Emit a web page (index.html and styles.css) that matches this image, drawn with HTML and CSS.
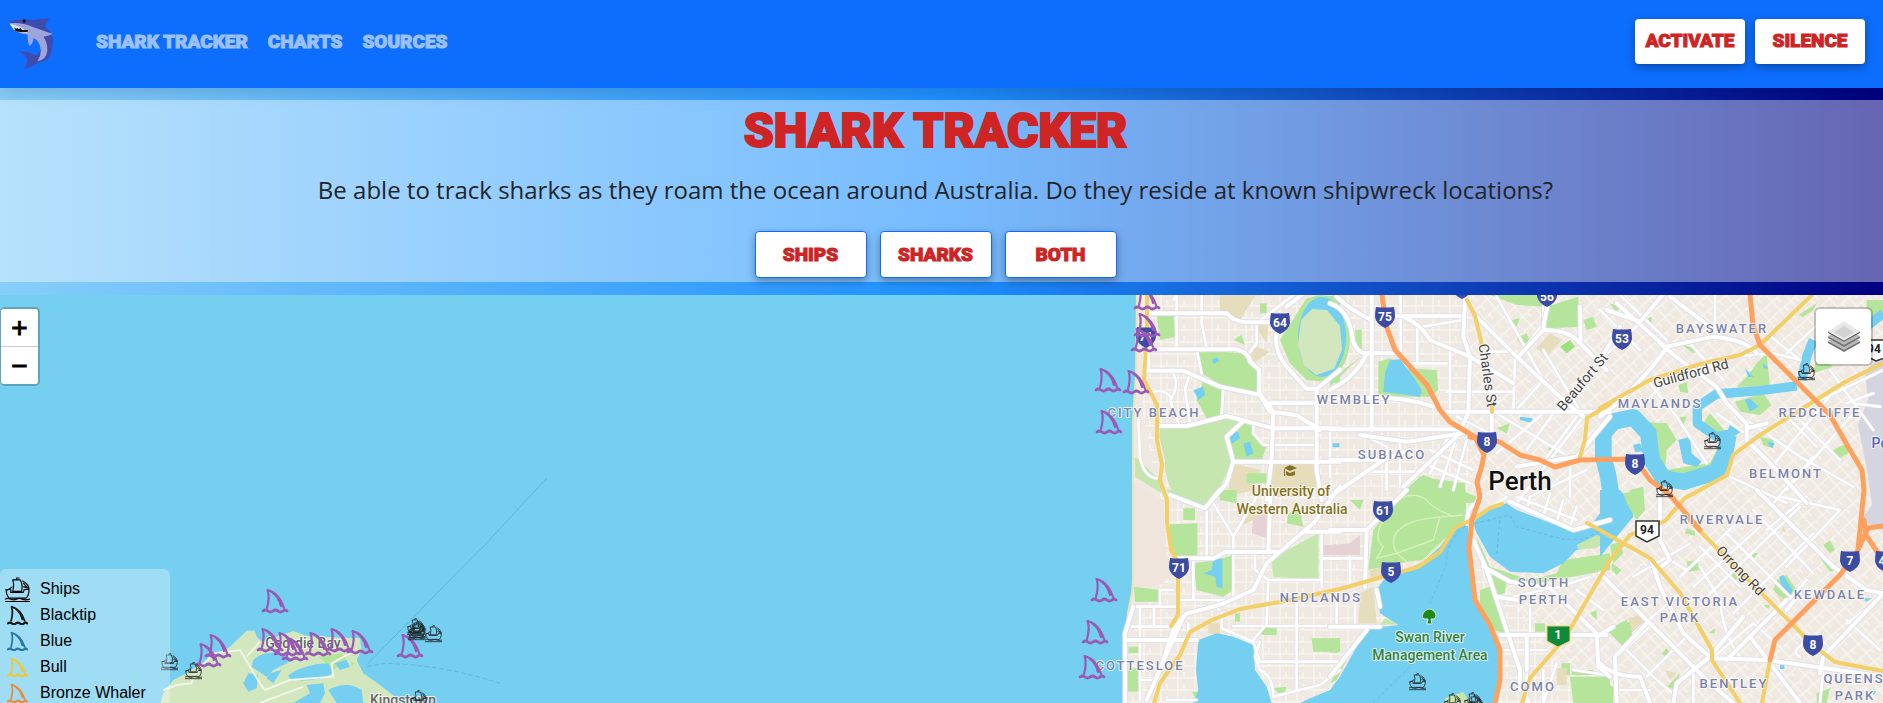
FILE: index.html
```html
<!DOCTYPE html>
<html lang="en">
<head>
<meta charset="utf-8">
<title>Shark Tracker</title>
<link rel="stylesheet" href="styles.css">
</head>
<body>
<nav class="navbar">
  <a class="brand" href="#" aria-label="Shark Tracker home">
    <svg viewBox="0 0 140 156" aria-hidden="true">
      <path fill="#3f4caf" d="M2 12Q22 2 76 6Q100 0 124 2Q112 14 111 27Q136 42 134 76Q132 116 112 128L98 132Q88 134 78 142Q62 150 45 154Q58 142 57 124Q50 106 30 100Q62 98 84 113Q98 106 98 84Q90 56 62 46L24 40Z"/>
      <path fill="#9da6dc" d="M3 16Q40 12 72 26Q96 34 134 48Q118 54 106 56Q124 84 114 112Q106 128 88 129Q98 114 98 98Q96 68 76 60Q74 78 64 84Q56 66 59 50Q34 48 20 36Z"/>
      <path fill="#e8eaf6" d="M5 18Q26 20 58 40L58 44Q26 44 16 34Z"/>
      <path fill="#151515" d="M18 28L24 32L28 29L32 34L37 30L42 36L60 36L58 42L34 42L22 39Z"/>
      <circle cx="48" cy="9" r="5" fill="#111"/>
    </svg>
  </a>
  <div class="links">
    <a href="#">SHARK TRACKER</a>
    <a href="#">CHARTS</a>
    <a href="#">SOURCES</a>
  </div>
  <div class="actions">
    <button class="btn" type="button">ACTIVATE</button>
    <button class="btn" type="button">SILENCE</button>
  </div>
</nav>

<header class="hero">
  <h1>SHARK TRACKER</h1>
  <p>Be able to track sharks as they roam the ocean around Australia. Do they reside at known shipwreck locations?</p>
  <div class="filters">
    <button class="btn outlined" type="button">SHIPS</button>
    <button class="btn outlined" type="button">SHARKS</button>
    <button class="btn outlined" type="button">BOTH</button>
  </div>
</header>

<main class="map">
<svg class="canvas" viewBox="0 295 1883 408" preserveAspectRatio="xMinYMin slice" role="img" aria-label="Map of Perth">
<defs>
  <pattern id="grid" width="17" height="12" patternUnits="userSpaceOnUse"><path class="lane" d="M0 6H17M5 0V12M11 0V6"/></pattern>
  <pattern id="diag" width="15" height="12" patternUnits="userSpaceOnUse" patternTransform="rotate(-42)"><path class="lane" d="M0 6H15M5 0V12M11 6V12"/></pattern>
  <symbol id="fin" viewBox="0 0 26 25" overflow="visible">
    <path d="M5 20Q8 9 5.500 2Q17 5 22 20M10 4Q17 9 19 18" fill="none" stroke="currentColor" stroke-width="2.200" stroke-linejoin="round" stroke-linecap="round"/>
    <path d="M1 23Q3.500 21 6 23T11 23T16 23T21 23T25 23" fill="none" stroke="currentColor" stroke-width="2.800" stroke-linecap="round"/>
  </symbol>
  <symbol id="ship" viewBox="0 0 26 26" overflow="visible">
    <g fill="none" stroke="currentColor" stroke-width="1.200" stroke-linejoin="round">
      <path d="M1 13H6V16H19L20 13H25Q25 19 22 22H4Q1 18 1 13ZM8 15Q10 8 8 3H16Q19 9 17 15Z"/>
      <path d="M12 3V1H15M18 4Q24 7 25 12L19 10M19 6L23 11M2 14L8 10"/>
      <path d="M0 23Q3 21.500 6 23T12 23T18 23T26 23M0 25.500H26"/>
    </g>
  </symbol>
  <path id="shield" d="M-9 -10Q0 -9 9 -10Q10 -5 10 0Q9 7 0 11Q-9 7 -10 0Q-10 -5 -9 -10Z"/>

  <g id="minor">
    <g transform="translate(1060 290) scale(.3333)"><path d="M350 15V175M425 15V100L440 175M590 100V160L560 200M410 180L425 250M340 250Q360 290 330 330L355 400M390 250L375 300L390 400M490 295L485 375M235 390L240 500Q250 560 290 565M580 400V430L610 465H770M605 335H770M700 15L590 100M270 310Q310 290 335 325M340 30L350 15M640 420L770 420"/></g>
    <g transform="translate(1060 490) scale(.3333)"><path d="M440 50V195M460 40L520 140V330M585 190V240L625 270H785M785 130V290M785 205H840M400 205V330M360 330H520M300 300V350M340 300H300V348M215 350H360M240 350V455M282 350V410M215 410H330M240 455V630M475 330V360M485 370V415L580 455L600 515H840M520 408H840M710 330V600M600 455L585 500L600 540Q640 560 640 620L780 585L840 540M320 630H410M240 570H300M385 400V450M615 408L580 450M590 20L520 140M625 270L620 400"/></g>
    <g transform="translate(1330 290) scale(.3333)"><path d="M212 15V190M262 100V215M230 220H350M360 180V370M415 180V370M350 305H550M555 205L550 370M280 110L400 90M640 270L550 370M640 50V100L565 200M500 20L640 270M760 380L560 640M700 330L590 480M500 370L700 490M640 370L500 490M380 380L500 440M360 430L300 550M380 440L330 590M410 450L370 600M300 480L430 540M280 520L420 580M110 440L170 470V600M210 450V590M0 420V560M130 545H280M740 380L630 530M770 540L600 620M720 500V620M640 180L760 380M480 185H560"/></g>
    <g transform="translate(1330 490) scale(.3333)"><path d="M60 200V290M20 310V410M75 305V410M0 205H100M510 330L640 300M600 320V430M590 440V639M660 300L780 260M510 480H650M640 540V639M820 360L740 300M730 540L830 555M560 560L600 639M680 520L640 639M530 20L500 40M600 20L590 60M660 10L640 80M700 30L680 95M740 50L720 110M560 20L740 90"/></g>
    <g transform="translate(1600 290) scale(.3333)"><path d="M0 60L120 180M60 15L200 150M345 15V150M500 130L600 210L520 190L400 200M560 190L700 60M0 210L130 90M260 150L370 270M150 280L230 380L320 520M230 250L150 320M350 370L450 440M440 390L600 500L760 590M500 550L720 280M560 600L760 370M620 350L850 240M600 390L720 510M740 340L820 310M760 340L840 350M690 240L820 420M650 470L560 380M390 560L560 639M640 500L520 639"/></g>
    <g transform="translate(1600 490) scale(.3333)"><path d="M240 260L430 80M280 290L480 110M310 330L600 50M400 370L640 130M300 170L420 290M380 130L580 330M460 60L640 250M540 20L720 60L560 230M620 270L540 360M330 510L460 400L540 470M260 240L210 210M100 260L270 160M240 310L100 430M300 230L360 330Q370 440 420 500M280 520V639M140 560L260 440M160 400L50 500M500 120L620 20M70 470L160 560L230 620M60 600H150M660 640L670 540M740 400L850 320M600 500Q560 480 650 440M740 390L840 480"/></g>
  </g>
  <g id="major">
    <g transform="translate(1060 290) scale(.3333)"><path d="M265 70H500Q520 95 560 97H640M270 178H530Q570 190 570 215L598 240V310L640 365L635 510L620 630M260 242H370L480 290L600 315L630 365L710 375L780 420M630 340H770M300 408H380L500 378L640 415H840M840 240L770 297V540L785 630M650 130Q640 180 680 230L740 297H770M725 15L680 50M545 398L500 440L520 515L500 580L455 630M520 515H840M265 70V230"/></g>
    <g transform="translate(1060 490) scale(.3333)"><path d="M330 15L435 55L480 0M350 205H460L500 185H660M632 0L625 185M840 -10L760 100L620 220L580 300L480 345L380 370L340 420L300 540L260 630M205 450H410M370 380L290 560M740 125H840M195 640V430L220 350"/></g>
    <g transform="translate(1330 290) scale(.3333)"><path d="M125 15V420M175 78H390M0 40Q60 60 68 150Q80 190 110 190H205M405 30L400 140L420 200L415 370L380 440L220 590M220 80Q270 100 300 150L420 200L550 280M430 70L560 200L700 330L760 380M565 200L640 120Q720 120 750 160L830 240M350 365H840M0 418H400M0 330Q200 310 310 350M90 435L230 455L400 430M0 510H160L240 480M485 370V430M20 20Q60 60 125 90M750 50L752 150M110 190Q80 260 0 300M840 380L740 500L560 530M160 510L0 620M660 10L640 110"/></g>
    <g transform="translate(1330 490) scale(.3333)"><path d="M230 0L110 120L105 290M0 120H110M410 100L415 60L460 20M430 150L470 240L570 540V600M460 230L540 275L660 295L800 430L805 530L840 560M510 435H830M500 320L560 330M150 350L140 300M150 410H0M110 420L0 560M540 35L730 120L840 90M590 440V540M850 410L800 440"/></g>
    <g transform="translate(1600 290) scale(.3333)"><path d="M0 380Q90 320 200 175L50 40M20 60L120 95L200 0M200 170L340 140Q440 150 470 190M180 160L260 225L350 290L380 340L440 400L440 450L540 550L620 639M210 20L330 110M440 415L500 400M60 110L0 210"/></g>
    <g transform="translate(1600 490) scale(.3333)"><path d="M470 0L700 230L800 300L850 310L670 500L660 550M340 505L500 510L850 560M0 250L140 390L330 580L400 639M380 510L450 440L560 330M450 440L600 639M0 520Q40 560 120 560L150 639M50 639L45 500L140 400M150 200L180 290L250 430L340 510M220 639L230 580L330 500L430 380M560 360L600 310M180 0V150L210 210L170 240"/></g>
  </g>
</defs>

<rect x="0" y="295" width="1883" height="408" fill="#75cff0"/>
<path fill="#efe9e1" d="M1137 290L1136 375L1133 420L1133 580L1132 593L1128 613L1123 657L1123 703H1883V290Z"/>
<path fill="url(#grid)" d="M1142 290L1142 410L1160 500L1150 600L1130 640V703H1580L1470 530V290Z"/>
<path fill="url(#diag)" d="M1470 290H1883V703H1580L1470 540Z"/>
<path fill="none" stroke="#efe3b4" stroke-width="2" d="M1137 290L1136 375L1133 420L1133 580L1132 593L1128 613L1123 657"/>
<path fill="#f0e5dd" d="M1134 482L1163 500L1166 555L1178 570L1160 585L1134 588Z"/>
<path fill="#d4d5e1" d="M1883 352L1865 372L1868 400L1858 425L1867 470L1872 505L1861 520L1883 530Z"/>

<g transform="translate(1060 290) scale(.3333)">
  <path fill="#e6ddbd" d="M480 15L590 10L540 90L480 60ZM590 105H625L620 160L600 130ZM630 520H760L770 590L720 620H630ZM520 520L600 540L580 600L500 620ZM550 200L590 170L630 185L580 220Z"/>
  <path fill="#b5e59b" d="M410 180L550 190L600 240V310L490 290L425 250ZM430 270L490 295L485 375L440 385L410 330ZM520 150L545 135L555 165ZM290 70L340 60L345 140L300 150ZM540 400L580 405L590 450L620 465L605 515H525L500 440ZM600 40H620V70H600ZM560 550H620V580H560ZM740 25L660 150L690 220L740 270L840 280V15Z"/>
  <path fill="#c5e6ae" d="M300 412L500 382L540 392L500 440L515 520L460 630H350Q310 560 315 510L298 440ZM225 500L300 570L305 610L225 560Z"/>
  <path fill="#75cff0" d="M400 300L430 290L435 315L415 330ZM505 430L535 425L540 445L515 462ZM550 460L570 455L580 490L560 500ZM455 210L470 202L478 212L462 222Z"/>
</g>
<ellipse cx="1321" cy="338" rx="29" ry="43" fill="#b5e59b"/>
<ellipse cx="1322" cy="337" rx="24" ry="40" fill="#75cff0"/>
<path fill="#d2e7bd" d="M1301 320L1312 309L1327 310L1340 326L1342 350L1334 369L1316 375L1304 365L1298 345Z"/>
<g transform="translate(1060 490) scale(.3333)">
  <path fill="#c5e6ae" d="M320 0H480L435 55L330 15ZM635 205L775 130V270L640 260Z"/>
  <path fill="#b5e59b" d="M330 103L412 100V195L350 205L330 180ZM475 0H530V40L480 30ZM370 55H405V90H370ZM400 220L470 210L520 195V300L490 320L410 300ZM222 290L300 300L305 335H225ZM205 470H237V490H205ZM202 535H237V605H202ZM755 445H840V485H760ZM600 412L650 415V435H605ZM685 70L720 60L730 110L680 100ZM640 595L680 590L670 620ZM525 370H540V395H525ZM395 605H440L410 630Z"/>
  <path fill="#e6d1d4" d="M580 80L620 70L622 145L575 130ZM790 165H840V195H790Z"/>
  <path fill="#e6ddbd" d="M550 60L590 45V85L550 105ZM445 400H480V435L445 430Z"/>
  <path fill="#75cff0" d="M460 210L487 205V295L470 290L465 260L430 250L455 240Z"/>
  <path fill="#75cff0" d="M415 450L470 430L520 440L580 465L585 540L620 590L635 640H400L415 600L408 540Z"/>
</g>
<g transform="translate(1330 290) scale(.3333)">
  <path fill="#b5e59b" d="M145 215L180 205L230 235L320 240L325 300L300 320H145ZM480 15H640V50L560 45ZM650 50L745 20L750 110L650 115ZM0 270L100 195L60 230L0 290ZM75 120L95 118V185H80ZM200 630L280 555L440 620L430 640ZM560 145L590 130L600 155L575 165ZM655 475L680 470L685 495H660ZM500 415L540 400L530 430ZM760 90L790 80L800 110L770 120ZM545 90L570 85L560 110Z"/>
  <path fill="#75cff0" d="M165 250L180 210L210 208L250 260L275 300L270 320L160 305ZM570 380L608 385L605 398L570 390ZM620 170L640 170L635 182ZM8 460H28V472H8Z"/>
  <path fill="#e6ddbd" d="M620 175L660 130L695 150L650 200Z"/>
  <path fill="#9ee07f" d="M690 170L720 150L735 170L710 190Z"/>
</g>
<g transform="translate(1330 490) scale(.3333)">
  <path fill="#b5e59b" d="M215 10L270 -40L405 -20L410 90L340 150L280 210L230 215L115 240L130 120Z"/>
  <path fill="#b5e59b" d="M60 30H100L90 60ZM440 140L480 230L600 270L680 250L700 210L840 190V240L620 280L520 280L460 230ZM450 300L480 290L525 430L490 420L450 340ZM485 250L530 265L525 310L500 315ZM615 400H645V425H615ZM720 560H840V639H730ZM695 520H720V555H695ZM100 420L150 400L60 490L20 570L0 580L60 470ZM780 370L800 360V390ZM725 540H790V555H725ZM0 445H25V488H0Z"/>
  <path fill="#e6d1d4" d="M0 165L60 160L90 135V195H0Z"/>
  <path fill="#e6ddbd" d="M90 310L130 290L140 400H85ZM120 240L190 225L160 265H120ZM680 535H710V585H680Z"/>
  <path fill="#75cff0" d="M-90 639L-60 625L0 600L30 560L80 470L120 415L205 405L150 370L140 300L160 270L280 215L330 170L370 115L415 100V200L435 320L480 410L505 480V560L495 639Z"/>
  <path fill="#75cff0" d="M430 100L460 60L530 40L560 60L730 125L780 110L840 30V160L740 180L700 220L640 250L540 245L480 200L440 130Z"/>
  <path fill="#c5e6ae" d="M740 165L800 135L830 140L800 175L745 178ZM150 405L205 403L165 385ZM345 625L400 605L420 639H345Z"/>
  <path fill="none" stroke="#d9efbe" stroke-width="4" d="M370 80Q300 50 290 30Q230 -10 180 60Q120 140 160 170L140 205L200 190L230 215M330 80L310 150L200 190Q160 110 290 85L400 75M280 210Q340 150 320 170"/>
  <path fill="none" stroke="#6ba9d9" stroke-width="2" stroke-dasharray="10 8" d="M405 110Q350 150 350 220L300 340M500 190L510 90M435 100L540 75L560 110L700 148H760L840 110M290 480L130 639"/>
</g>
<g transform="translate(1600 290) scale(.3333)">
  <path fill="#b5e59b" d="M130 395L200 400L230 450L200 480L195 540L330 520L350 480L380 470L350 560L200 590L140 500ZM330 370L390 440L370 470L310 400ZM470 220L500 190L510 290H410L440 260ZM405 335L490 310L515 345L480 375L420 365ZM595 75L650 40L640 60L610 80ZM650 200L700 230L640 250ZM235 285L260 275L265 310L240 305ZM240 160L290 180L280 190ZM480 440L520 450L520 475L490 465ZM700 480L740 460L745 490L710 510ZM680 370L700 360V385ZM90 600L130 590V639H80ZM800 30H850V80H800ZM135 90L155 80V110ZM240 380L260 380L250 405L232 395ZM30 40L60 50L50 70Z"/>
  <g fill="none" stroke="#75cff0" stroke-linejoin="round">
    <path stroke-width="50" d="M40 660L25 560L10 500L10 430L40 395L100 382L145 430L155 510L190 565L250 575L350 545L375 490L385 435"/>
    <path stroke-width="28" d="M400 430L350 440L292 400L292 350L350 312L480 302L590 288"/>
    <path stroke-width="28" d="M605 270L620 200L640 150M800 110L850 70"/>
  </g>
  <path fill="#75cff0" d="M235 450L270 440L275 490L305 515L290 530L250 520ZM100 465L120 460L130 485L105 485ZM435 330L450 325L475 350L450 365ZM435 235L460 260L445 262ZM490 220L505 235L490 235ZM390 405L430 420L400 440L380 430ZM500 455L525 460L515 475Z"/>
</g>
<g transform="translate(1600 490) scale(.3333)">
  <path fill="#75cff0" d="M0 0H60L95 40L100 80L50 140L0 200Z"/>
  <path fill="#b5e59b" d="M30 165L60 155L70 190L40 220ZM70 10L130 0L135 60L110 90L80 40ZM35 220L65 240L50 255L35 240ZM260 215L290 210L300 240L265 245ZM450 185L475 190L460 205ZM650 190L665 188L710 240L690 245ZM530 270L560 255L590 300L560 340L520 300ZM200 590L240 550L230 600ZM20 420L80 390L105 440L70 470ZM650 610L690 595L680 639H650ZM0 570L40 590V639H0ZM670 165L690 150L705 180L690 190ZM260 115L285 125L285 138L255 130ZM385 260L400 245L415 265L400 275ZM490 345L510 345L505 357ZM325 430L345 415L345 430ZM185 490L200 475L210 490L195 500ZM70 400L90 395L100 420Z"/>
  <path fill="#e6ddbd" d="M85 385L130 370L150 400L100 440ZM530 310L570 340L545 345ZM195 540L230 550L210 570ZM550 110L560 130L545 120Z"/>
  <path fill="#75cff0" d="M538 260L550 255L578 300L570 318L545 290ZM540 525H553V537H540ZM785 325L815 325L800 335ZM815 600L830 605L820 615Z"/>
</g>

<g class="case thin"><use href="#minor"/></g><g class="road thin"><use href="#minor"/></g>
<g class="case"><use href="#major"/></g><g class="road"><use href="#major"/></g>

<g class="yellow">
  <path d="M1147 295V330L1144 380L1157 405V440L1162 465L1160 480L1167 500V522L1171 550L1178 562V615L1171 626"/>
  <path d="M1154 703L1160 683L1180 655L1190 632L1212 620L1240 609L1280 602L1340 589L1375 579L1418 567L1440 552L1455 528L1475 518L1490 508L1502 504"/>
  <path d="M1467 300L1475 316L1482 345M1492 404V412M1579 460L1585 440L1587 418L1610 404"/>
  <path d="M1587 523L1650 558L1680 593L1712 650V660L1740 703M1522 703L1530 678L1565 638L1610 560L1630 535L1665 521L1685 498L1700 490L1727 475L1733 455L1760 435L1800 410L1845 382L1883 363M1600 408L1650 380L1700 364L1740 355L1760 345L1812 295M1690 521L1813 645L1835 662L1883 671M1770 660L1762 703"/>
</g>
<g class="orange">
  <path d="M1382 295L1386 325L1395 350L1427 385L1440 410L1450 422L1475 437L1484 455L1482 465L1477 482L1480 497L1472 520L1469 548L1475 600L1490 625L1500 650V680L1495 703"/>
  <path d="M1470 437L1500 442L1520 455L1540 460L1555 467L1580 460L1635 459L1650 480L1670 495L1700 530M1750 295L1753 325L1760 345L1785 370L1800 385L1830 415L1850 450L1862 470L1864 490L1858 550M1883 526L1868 528L1858 550L1840 575L1775 640L1770 660M1864 520L1866 535L1880 556"/>
</g>

<g transform="translate(0 550) scale(.3333)">
  <path fill="#d2e7bd" d="M480 465L490 430L520 390L560 370L620 330L690 290L740 242L765 242L770 260L785 275L880 243L920 258L1000 262L1080 265L1085 300L1070 330L1090 370L1140 405L1185 440L1200 465Z"/>
  <path fill="#b5e59b" d="M955 320L1025 310L1040 330L1000 360ZM1050 335L1062 340L1060 350Z"/>
  <path fill="#75cff0" d="M760 330Q790 300 850 310L880 330L820 360L800 380L755 350ZM865 375Q920 340 985 340L1000 370Q940 400 870 388ZM1005 340L1040 330L1050 350L1020 360ZM730 400L745 370L775 375L770 415L745 425ZM810 370L845 360L820 400L800 385ZM920 405L970 400L975 430L960 459H880L930 430ZM985 420Q1040 390 1085 420L1090 459H1010Z"/>
  <path fill="none" stroke="#f1f4e8" stroke-width="6" d="M490 420L530 405L575 400L580 380L640 310L720 300L780 400L795 420L870 390L1000 380L995 340L1050 310M740 320L780 275M780 459L910 410"/>
  <path fill="none" stroke="#66b4dc" stroke-width="3" d="M1440 -2L1100 345"/>
  <path fill="none" stroke="#66b4dc" stroke-width="3" stroke-dasharray="14 8" d="M1100 350L1160 340Q1330 345 1500 400"/>
</g>
<path fill="none" stroke="#66b4dc" d="M547 478L480 550"/>

<g class="shields">
  <use href="#shield" x="1146" y="337"/><use href="#shield" x="1280" y="323"/><use href="#shield" x="1385" y="317"/><use href="#shield" x="1462" y="288"/><use href="#shield" x="1547" y="296"/><use href="#shield" x="1622" y="339"/><use href="#shield" x="1487" y="442"/><use href="#shield" x="1635" y="464"/><use href="#shield" x="1383" y="511"/><use href="#shield" x="1179" y="568"/><use href="#shield" x="1391" y="572"/><use href="#shield" x="1850" y="561"/><use href="#shield" x="1885" y="561"/><use href="#shield" x="1813" y="645"/>
</g>
<path d="M1547 626H1570V641L1558 647L1547 641Z" fill="#0f8a3a" stroke="#f3cf67" stroke-width="1"/>
<path d="M1636 521H1659V536L1647 542L1636 536ZM1866 340H1890V356L1876 361L1866 356Z" fill="#fff" stroke="#333" stroke-width="1.500"/>
<g class="num">
  <text x="1146" y="341">71</text><text x="1280" y="327">64</text><text x="1385" y="321">75</text><text x="1547" y="301">56</text><text x="1622" y="343">53</text><text x="1487" y="446">8</text><text x="1635" y="468">8</text><text x="1383" y="515">61</text><text x="1179" y="572">71</text><text x="1391" y="576">5</text><text x="1850" y="565">7</text><text x="1882" y="565">4</text><text x="1813" y="649">8</text><text x="1558" y="639">1</text>
  <text class="ink" x="1647" y="534">94</text><text class="ink" x="1874" y="353">94</text>
</g>

<g class="suburb">
  <text x="1154" y="417">CITY BEACH</text><text x="1354" y="404">WEMBLEY</text><text x="1392" y="459">SUBIACO</text><text x="1722" y="333">BAYSWATER</text><text x="1660" y="408">MAYLANDS</text><text x="1820" y="417">REDCLIFFE</text><text x="1786" y="478">BELMONT</text><text x="1722" y="524">RIVERVALE</text><text x="1680" y="606">EAST VICTORIA</text><text x="1680" y="622">PARK</text><text x="1830" y="599">KEWDALE</text><text x="1734" y="688">BENTLEY</text><text x="1854" y="683">QUEENS</text><text x="1855" y="700">PARK</text><text x="1544" y="587">SOUTH</text><text x="1544" y="604">PERTH</text><text x="1533" y="691">COMO</text><text x="1321" y="602">NEDLANDS</text><text x="1140" y="670">COTTESLOE</text>
</g>
<text class="place" x="1520" y="490">Perth</text>
<g class="poi uni"><text x="1291" y="496">University of</text><text x="1292" y="514">Western Australia</text></g>
<g class="poi river"><text x="1430" y="642">Swan River</text><text x="1430" y="660">Management Area</text></g>
<text class="poi port" x="1880" y="448">Po</text>
<g class="street">
  <text transform="translate(1483 376) rotate(82)">Charles St</text>
  <text transform="translate(1586 385) rotate(-50)">Beaufort St</text>
  <text transform="translate(1692 378) rotate(-15)">Guildford Rd</text>
  <text transform="translate(1737 574) rotate(46)">Orrong Rd</text>
</g>
<g class="town"><text x="303" y="648">Geordie Bay</text><text x="403" y="705">Kingstown</text></g>
<path fill="#857221" d="M1284 468L1290 465L1297 468L1290 471ZM1286 471L1290 473L1295 471V475Q1290 477 1286 475ZM1284 469H1285V476H1284Z"/>
<path fill="#1f8a1a" stroke="#d9efe4" stroke-width="1" d="M1425 611Q1429 607 1434 611Q1438 616 1434 619H1431L1432 624H1427L1428 619H1424Q1420 616 1425 611Z"/>

<g class="fins">
  <use href="#fin" x="262" y="588" width="26" height="25"/><use href="#fin" x="195" y="642" width="26" height="25"/><use href="#fin" x="205" y="633" width="26" height="25"/><use href="#fin" x="257" y="627" width="26" height="25"/><use href="#fin" x="274" y="631" width="26" height="25"/><use href="#fin" x="282" y="636" width="26" height="25"/><use href="#fin" x="305" y="631" width="26" height="25"/><use href="#fin" x="326" y="627" width="26" height="25"/><use href="#fin" x="347" y="629" width="26" height="25"/><use href="#fin" x="397" y="633" width="26" height="25"/>
  <use href="#fin" x="1134" y="285" width="26" height="25"/><use href="#fin" x="1134" y="312" width="26" height="25"/><use href="#fin" x="1131" y="327" width="26" height="25"/><use href="#fin" x="1095" y="367" width="26" height="25"/><use href="#fin" x="1123" y="369" width="26" height="25"/><use href="#fin" x="1096" y="409" width="26" height="25"/><use href="#fin" x="1091" y="577" width="26" height="25"/><use href="#fin" x="1082" y="619" width="26" height="25"/><use href="#fin" x="1079" y="654" width="26" height="25"/>
</g>
<g class="ships">
  <use href="#ship" x="161" y="653" width="17" height="17"/><use href="#ship" x="185" y="662" width="17" height="17"/><use href="#ship" x="407" y="618" width="17" height="17"/><use href="#ship" x="409" y="621" width="17" height="17"/><use href="#ship" x="408" y="623" width="17" height="17"/><use href="#ship" x="425" y="625" width="17" height="17"/><use href="#ship" x="410" y="690" width="17" height="17"/><use href="#ship" x="1409" y="673" width="17" height="17"/><use href="#ship" x="1444" y="693" width="17" height="17"/><use href="#ship" x="1464" y="692" width="17" height="17"/><use href="#ship" x="1466" y="695" width="17" height="17"/><use href="#ship" x="1798" y="363" width="17" height="17"/><use href="#ship" x="1704" y="432" width="17" height="17"/><use href="#ship" x="1656" y="480" width="17" height="17"/>
</g>
</svg>

<div class="zoom">
  <button type="button" aria-label="Zoom in">+</button>
  <button type="button" aria-label="Zoom out">−</button>
</div>
<button class="layers" type="button" aria-label="Layers">
  <svg viewBox="0 0 32 32" aria-hidden="true">
    <path fill="#747474" d="M0 22L16 31L32 22V20L16 28L0 20Z"/><path fill="#b9b9b9" d="M0 20L5 17.500L16 23L27 17.500L32 20L16 29Z"/>
    <path fill="#747474" d="M0 17L16 26L32 17V15L16 23L0 15Z"/><path fill="#b9b9b9" d="M0 15L5 12.500L16 18L27 12.500L32 15L16 24Z"/>
    <path fill="#6a6a6a" d="M0 10L16 19L32 10V12L16 21L0 12Z"/><path fill="#e9e9e9" d="M0 10.500L16 0L32 10.500L16 19.500Z"/><path fill="#d2d2d2" d="M6 11L16 5L26 11L16 17Z"/>
  </svg>
</button>
<ul class="legend">
  <li><svg class="boat" viewBox="0 0 26 26"><use href="#ship"/></svg>Ships</li>
  <li><svg class="black" viewBox="0 0 26 25"><use href="#fin"/></svg>Blacktip</li>
  <li><svg class="blue" viewBox="0 0 26 25"><use href="#fin"/></svg>Blue</li>
  <li><svg class="bull" viewBox="0 0 26 25"><use href="#fin"/></svg>Bull</li>
  <li><svg class="bronze" viewBox="0 0 26 25"><use href="#fin"/></svg>Bronze Whaler</li>
</ul>
</main>
</body>
</html>
```
FILE: styles.css
```css
* { box-sizing: border-box; }

body {
  margin: 0;
  min-height: 100vh;
  display: flex;
  flex-direction: column;
  background: linear-gradient(to right, #87cefa, #1e90ff, #000080);
  font-family: "Open Sans", sans-serif;
  color: #212529;
}

.navbar {
  display: flex;
  align-items: center;
  height: 88px;
  padding: 0 18px 0 8px;
  background: #0d6efd;
  box-shadow: 0 4px 16px rgba(0, 0, 0, 0.15);
}

.brand { display: block; height: 52px; }
.brand svg { display: block; width: 47px; height: 52px; }

.links {
  display: flex;
  gap: 20px;
  margin: 0 auto 5px 41px;
}

.links a {
  color: #9ac0fe;
  font: 900 19px/24px Roboto, sans-serif;
  -webkit-text-stroke: 1px currentColor;
  text-decoration: none;
}

.actions { display: flex; gap: 10px; margin-bottom: 6px; }

.btn {
  min-width: 110px;
  height: 45px;
  padding: 0 10px;
  border: 0;
  border-radius: 4px;
  background: #fff;
  color: #ce2424;
  font: 900 19px/24px Roboto, sans-serif;
  -webkit-text-stroke: 1px currentColor;
  box-shadow: 0 3px 8px rgba(0, 0, 0, 0.35);
}

.btn.outlined {
  min-width: 112px;
  height: 47px;
  border: 1px solid #0d6efd;
}

.hero {
  margin: 12px 0 13px;
  padding: 0 12px 4px 0;
  display: flex;
  flex-direction: column;
  align-items: center;
  background: rgba(255, 255, 255, 0.4);
  text-align: center;
}

.hero h1 {
  margin: 0;
  color: #ce2424;
  font: 900 48px/62px Roboto, sans-serif;
  -webkit-text-stroke: 2px currentColor;
}

.hero p { margin: 8px 0 21px; font-size: 24px; line-height: 40px; }

.filters { display: flex; gap: 13px; }

.map {
  position: relative;
  flex: 1;
  min-height: 408px;
  overflow: hidden;
  background: #75cff0;
}

.canvas { position: absolute; inset: 0; width: 100%; height: 100%; }

.lane { fill: none; stroke: #fbf9f6; stroke-width: 1; }
.road, .case, .yellow, .orange { fill: none; stroke-linecap: round; stroke-linejoin: round; }
.case { stroke: #dddeea; stroke-width: 17; }
.road { stroke: #fff; stroke-width: 12; }
.case.thin { stroke-width: 11; }
.road.thin { stroke-width: 8; }
.yellow { stroke: #f3cf67; stroke-width: 4; }
.orange { stroke: #ffa15e; stroke-width: 5; }

.shields { fill: #3c4ba3; }
.num { fill: #fff; font: 700 12px Roboto, sans-serif; text-anchor: middle; }
.num .ink { fill: #222; }

.suburb, .place, .poi, .street, .town {
  font-family: Roboto, sans-serif;
  text-anchor: middle;
  paint-order: stroke;
  stroke: rgba(255, 255, 255, 0.75);
  stroke-width: 2px;
  stroke-linejoin: round;
}

.suburb { fill: #7a82a8; font-size: 13px; font-weight: 500; letter-spacing: 2px; }
.place { fill: #111; font-size: 26px; font-weight: 500; }
.poi { font-size: 14px; font-weight: 500; }
.uni { fill: #857221; }
.river { fill: #37803a; }
.port { fill: #5566b8; }
.street { fill: #444; font-size: 14px; font-weight: 400; }
.town { fill: #666; font-size: 14px; font-weight: 500; }

.fins { color: #9b59b6; }
.ships { color: #1b1b1b; }

.zoom {
  position: absolute;
  top: 12px;
  left: 0;
  border: 2px solid rgba(0, 0, 0, 0.2);
  border-left-width: 1px;
  border-radius: 5px;
  background-clip: padding-box;
}

.zoom button {
  display: block;
  width: 37px;
  height: 38px;
  padding: 0;
  border: 0;
  border-bottom: 1px solid #ccc;
  border-radius: 3px 3px 0 0;
  background: #fff;
  color: #000;
  font: 28px/36px "Liberation Sans", Arial, sans-serif;
  -webkit-text-stroke: 1px currentColor;
}

.zoom button:last-child { height: 37px; border-bottom: 0; border-radius: 0 0 3px 3px; }

.layers {
  position: absolute;
  top: 12px;
  right: 10px;
  width: 59px;
  height: 59px;
  padding: 0;
  border: 2px solid rgba(0, 0, 0, 0.2);
  border-radius: 6px;
  background: #fff;
  background-clip: padding-box;
}

.layers svg { display: block; width: 32px; height: 32px; margin: auto; }

.legend {
  position: absolute;
  top: 274px;
  bottom: 0;
  left: 0;
  margin: 0;
  padding: 7px 24px 0 5px;
  border-radius: 6px 6px 0 0;
  background: rgba(255, 255, 255, 0.3);
  color: #000;
  font: 16px/26px "Liberation Sans", Arial, sans-serif;
  list-style: none;
}

.legend li { display: flex; align-items: center; height: 26px; }
.legend svg { width: 21px; height: 20px; margin: 0 12px 0 2px; }
.legend .boat { width: 25px; height: 25px; margin: 0 10px 0 0; }
.legend .black { color: #1a1a1a; }
.legend .blue { color: #2e75a3; }
.legend .bull { color: #f0c830; }
.legend .bronze { color: #ea8c3c; }
```
